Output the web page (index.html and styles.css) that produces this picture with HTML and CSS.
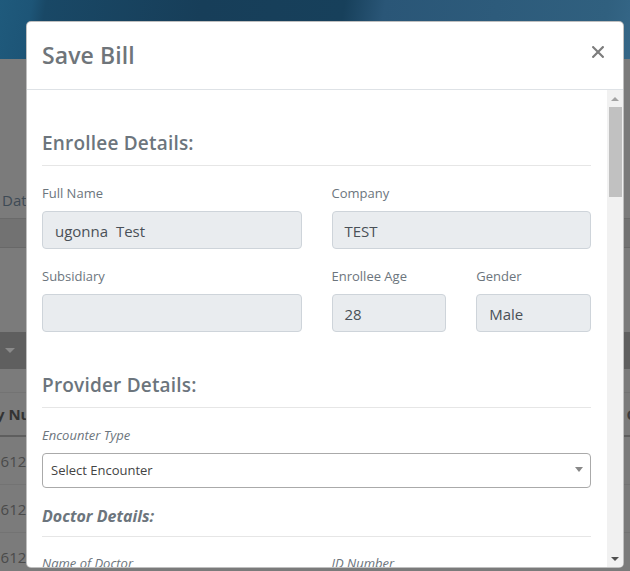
FILE: index.html
```html
<!DOCTYPE html>
<html>
<head>
<meta charset="utf-8">
<link rel="stylesheet" href="styles.css">
</head>
<body>
<div class="page">
  <div class="topbar"></div>
  <div class="content">
    <div class="filter-row"><span class="date-label">Date</span></div>
    <div class="filter-band"></div>
    <div class="spacer-a"></div>
    <div class="table-bar"><span class="caret"></span></div>
    <div class="spacer-b"></div>
    <div class="thead"><span class="th-left">y Number</span><span class="th-right">C</span></div>
    <div class="trow"><span class="td">1612</span></div>
    <div class="trow"><span class="td">1612</span></div>
    <div class="trow"><span class="td">1612</span></div>
  </div>
</div>

<div class="modal">
  <div class="modal-header">
    <h3 class="modal-title">Save Bill</h3>
    <svg class="close" width="12" height="12" viewBox="0 0 12 12"><path d="M1.2 1.2 L10.8 10.8 M10.8 1.2 L1.2 10.8" stroke="#7d7d7d" stroke-width="2.2" stroke-linecap="square"/></svg>
  </div>
  <div class="modal-body">
    <div class="body-content">
      <h4 class="section-title first">Enrollee Details:</h4>
      <div class="rule"></div>
      <div class="grid2">
        <div class="field">
          <label class="lbl">Full Name</label>
          <div class="input">ugonna&nbsp; Test</div>
        </div>
        <div class="field">
          <label class="lbl">Company</label>
          <div class="input">TEST</div>
        </div>
        <div class="field gap-top">
          <label class="lbl">Subsidiary</label>
          <div class="input"></div>
        </div>
        <div class="grid2 gap-top">
          <div class="field">
            <label class="lbl">Enrollee Age</label>
            <div class="input">28</div>
          </div>
          <div class="field">
            <label class="lbl">Gender</label>
            <div class="input">Male</div>
          </div>
        </div>
      </div>
      <h4 class="section-title second">Provider Details:</h4>
      <div class="rule"></div>
      <div class="field gap-label">
        <label class="lbl italic">Encounter Type</label>
        <div class="select"><span class="select-text">Select Encounter</span><span class="arrow"></span></div>
      </div>
      <h5 class="sub-title">Doctor Details:</h5>
      <div class="rule small"></div>
      <div class="grid2 gap-label2">
        <label class="lbl italic">Name of Doctor</label>
        <label class="lbl italic">ID Number</label>
      </div>
    </div>
    <div class="scrollbar">
      <span class="sb-up"></span>
      <div class="sb-thumb"></div>
      <div class="sb-fill"></div>
      <span class="sb-down"></span>
    </div>
  </div>
</div>
</body>
</html>
```

FILE: styles.css
```css
* { box-sizing: border-box; }
html, body { margin: 0; padding: 0; }
body {
  width: 630px;
  height: 571px;
  overflow: hidden;
  font-family: "Open Sans", "Noto Sans", sans-serif;
  background: #7b7b7b;
}
.page { width: 630px; }
.topbar {
  height: 59px;
  background: linear-gradient(100deg, #1f5a7c 0px, #1d5577 32px, #194866 46px, #173e59 200px, #17405b 340px, #2a5677 380px, #30607f 600px, #37698a 640px);
}
.content { background: #7b7b7b; }
.filter-row {
  height: 160px;
  display: flex;
  align-items: flex-end;
  padding-left: 2px;
  padding-bottom: 8px;
  border-bottom: 1px solid #6a6a6a;
}
.date-label { font-size: 15px; color: #3e4a55; }
.filter-band { height: 29px; background: #727272; border-bottom: 1px solid #686868; }
.spacer-a { height: 84px; }
.table-bar {
  height: 37px;
  background: #5f5f5f;
  display: flex;
  align-items: center;
  padding-left: 5px;
}
.caret {
  width: 0; height: 0;
  border-left: 5px solid transparent;
  border-right: 5px solid transparent;
  border-top: 5px solid #8a8a8a;
}
.spacer-b { height: 24px; border-bottom: 1px solid #737373; }
.thead {
  height: 44px;
  display: flex;
  align-items: center;
  justify-content: space-between;
  border-bottom: 2px solid #5e5e5e;
  font-weight: 700;
  font-size: 15px;
  color: #333;
}
.th-left { margin-left: -4px; }
.th-right { margin-right: -6px; color: #3c3c3c; }
.trow {
  height: 48px;
  display: flex;
  align-items: center;
  border-bottom: 1px solid #737373;
  font-size: 15px;
  color: #4a4a4a;
}
.td { margin-left: -8px; }

/* modal */
.modal {
  position: absolute;
  top: 21px;
  left: 26px;
  width: 598px;
  height: 547px;
  background: #fff;
  border: 1px solid rgba(0,0,0,0.25);
  border-radius: 5px;
  overflow: hidden;
  display: flex;
  flex-direction: column;
}
.modal-header {
  display: flex;
  align-items: flex-start;
  justify-content: space-between;
  padding: 16px 19px 16px 15px;
  border-bottom: 1px solid #dee2e6;
}
.modal-title {
  margin: 0;
  font-size: 23px;
  line-height: 35px;
  font-weight: 600;
  color: #6f757a;
  letter-spacing: 0.1px;
}
.close { margin-top: 8px; display: block; }
.modal-body {
  flex: 1;
  display: flex;
  min-height: 0;
}
.body-content {
  flex: 1;
  padding: 0 16px 0 15px;
  overflow: hidden;
}
.section-title {
  margin: 0;
  font-size: 19px;
  line-height: 24px;
  font-weight: 600;
  color: #6c757d;
  letter-spacing: 0.2px;
}
.section-title.first { margin-top: 41px; }
.section-title.second { margin-top: 41px; }
.rule { height: 1px; background: #e6e6e6; margin-top: 10px; }
.rule.small { margin-top: 9px; }
.grid2 {
  display: grid;
  grid-template-columns: 1fr 1fr;
  column-gap: 30px;
}
.grid2 > .field:nth-child(-n+2) { margin-top: 18px; }
.gap-top { margin-top: 18px; }
.grid2.gap-top > .field { margin-top: 0; }
.field { display: flex; flex-direction: column; }
.lbl {
  font-size: 13px;
  line-height: 18px;
  color: #6c757d;
  margin-bottom: 9px;
}
.lbl.italic { font-style: italic; }
.input {
  height: 38px;
  background: #e9ecef;
  border: 1px solid #ced4da;
  border-radius: 4px;
  padding-left: 12px;
  font-size: 15px;
  line-height: 38px;
  color: #495057;
}
.gap-label { margin-top: 18px; }
.select {
  height: 35px;
  border: 1px solid #aaa;
  border-radius: 4px;
  padding: 0 7px 2px 8px;
  display: flex;
  align-items: center;
  justify-content: space-between;
  font-size: 13px;
  color: #444;
}
.arrow {
  width: 0; height: 0;
  border-left: 4px solid transparent;
  border-right: 4px solid transparent;
  border-top: 5px solid #888;
  margin-top: 0;
}
.sub-title {
  margin: 17px 0 0;
  font-size: 16px;
  line-height: 22px;
  font-weight: 700;
  font-style: italic;
  color: #6c757d;
}
.gap-label2 { margin-top: 17px; }

/* scrollbar */
.scrollbar {
  width: 16px;
  background: #f1f1f1;
  display: flex;
  flex-direction: column;
  align-items: center;
}
.sb-up {
  margin-top: 7px;
  width: 0; height: 0;
  border-left: 4px solid transparent;
  border-right: 4px solid transparent;
  border-bottom: 4px solid #a3a3a3;
}
.sb-thumb {
  margin-top: 6px;
  width: 13px;
  height: 90px;
  background: #c1c1c1;
}
.sb-fill { flex: 1; }
.sb-down {
  margin-bottom: 6px;
  width: 0; height: 0;
  border-left: 4px solid transparent;
  border-right: 4px solid transparent;
  border-top: 4px solid #505050;
}
```
